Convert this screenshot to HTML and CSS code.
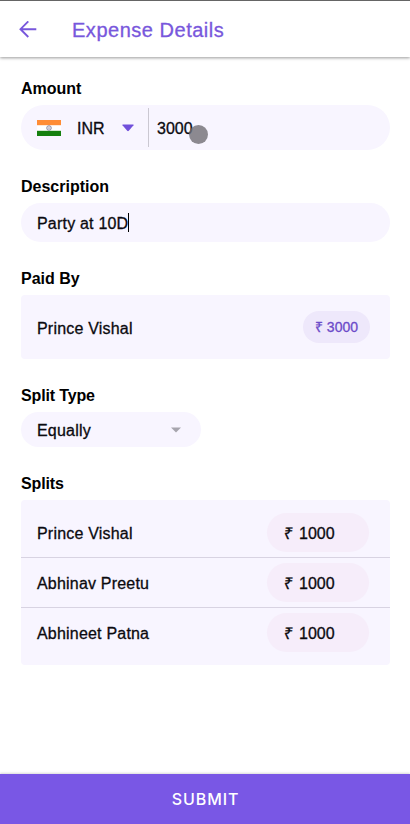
FILE: index.html
```html
<!DOCTYPE html>
<html lang="en">
<head>
<meta charset="utf-8">
<title>Expense Details</title>
<link rel="stylesheet" href="styles.css">
</head>
<body>
<div class="screen">
  <header class="header">
    <svg class="back" width="18" height="18" viewBox="0 0 18 18" fill="none" stroke="currentColor" stroke-width="1.9"><path d="M17.3 8.2H1.6M9.3.4L1.5 8.2l7.8 7.8"/></svg>
    <h1 class="title">Expense Details</h1>
  </header>
  <main class="form">
    <section class="group">
      <h2 class="label">Amount</h2>
      <div class="field amount">
        <svg class="flag" width="24" height="16" viewBox="0 0 24 16"><path fill="#fff" d="M0 0h24v16H0z"/><path fill="#ff8c35" d="M0 0h24v5.2H0z"/><path fill="#15800f" d="M0 10.8h24V16H0z"/><circle cx="12" cy="8" r="2.3" fill="#e5e5ee" stroke="#777796" stroke-width=".8"/><circle cx="12" cy="8" r=".6" fill="#777796"/></svg>
        <span class="code">INR</span>
        <svg class="caret" width="12" height="8" viewBox="0 0 12 8"><path fill="#7150db" d="M.8.6h10.4q.7 0 .3.7L6.8 6.8q-.8.8-1.6 0L.5 1.3Q.1.6.8.6z"/></svg>
        <span class="value">3000<i class="touch"></i></span>
      </div>
    </section>
    <section class="group">
      <h2 class="label">Description</h2>
      <div class="field description"><span>Party at 10D</span><i class="cursor"></i></div>
    </section>
    <section class="group">
      <h2 class="label">Paid By</h2>
      <div class="card payer"><span class="name">Prince Vishal</span><span class="paid">₹ 3000</span></div>
    </section>
    <section class="group">
      <h2 class="label tight">Split Type</h2>
      <div class="field select"><span>Equally</span><svg width="10" height="6" viewBox="0 0 10 6"><path fill="#a7a5ae" d="M0 .4h10L5 5.4z"/></svg></div>
    </section>
    <section class="group">
      <h2 class="label tight">Splits</h2>
      <div class="card splits">
        <div class="row"><span class="name">Prince Vishal</span><span class="share"><span class="rupee">₹</span>1000</span></div>
        <div class="row"><span class="name">Abhinav Preetu</span><span class="share"><span class="rupee">₹</span>1000</span></div>
        <div class="row"><span class="name">Abhineet Patna</span><span class="share"><span class="rupee">₹</span>1000</span></div>
      </div>
    </section>
  </main>
  <button class="submit">SUBMIT</button>
</div>
</body>
</html>
```

FILE: styles.css
```css
* { box-sizing: border-box; }
body {
  margin: 0;
  background: #fff;
  color: #0b0a0f;
  font: 16px/18px "Liberation Sans", Arial, sans-serif;
  -webkit-text-stroke: 0.3px currentColor;
}
.screen { display: flex; flex-direction: column; height: 824px; overflow: hidden; }
.header {
  display: flex;
  align-items: center;
  flex: none;
  height: 57px;
  padding: 2px 19px 0;
  border-top: 1px solid #656565;
  box-shadow: 0 1px 3px rgba(0, 0, 0, 0.4);
  color: #7857dc;
}
.back { margin-right: 35px; }
.title { margin: 0; font-size: 20px; line-height: 24px; font-weight: 400; letter-spacing: 0.52px; }
.form { flex: 1; display: flex; flex-direction: column; gap: 27px; padding: 22px 20px 0 21px; }
.label { margin: 0 0 7px; padding-top: 1px; font-size: 16px; line-height: 18px; font-weight: 700; color: #000; -webkit-text-stroke: 0; }
.tight { letter-spacing: -0.15px; }
.field { display: flex; align-items: center; padding: 0 16px; background: #f8f5ff; border-radius: 23px; }
.amount { height: 45px; }
.code { width: 30px; margin-left: 16px; padding-top: 2px; }
.caret { margin-left: 15px; }
.value {
  position: relative;
  display: flex;
  align-items: center;
  height: 39px;
  margin-left: 14px;
  padding: 2px 0 0 8px;
  border-left: 1px solid #cbc8d2;
}
.touch { position: absolute; left: 40px; top: 17px; width: 19px; height: 19px; border-radius: 50%; background: rgba(112, 110, 116, 0.8); }
.description { height: 39px; padding-top: 2px; letter-spacing: 0.2px; }
.cursor { width: 1px; height: 19px; margin-bottom: 2px; background: #000; }
.card { background: #f8f5ff; border-radius: 4px; }
.payer { display: flex; align-items: center; justify-content: space-between; height: 64px; padding: 0 20px 0 16px; }
.name { letter-spacing: 0.2px; padding-top: 2px; }
.payer .name { padding-top: 3px; }
.paid {
  width: 67px;
  height: 32px;
  border-radius: 16px;
  background: #eee8fb;
  color: #6c4bc9;
  font-size: 14px;
  line-height: 32px;
  text-align: center;
}
.select { width: 180px; height: 35px; justify-content: space-between; padding: 0 20px 0 16px; }
.select span { padding-top: 2px; letter-spacing: 0.2px; }
.splits { padding: 8px 0; }
.row { display: flex; align-items: center; justify-content: space-between; height: 50px; padding: 0 21px 0 16px; border-bottom: 1px solid #d8d3e2; }
.row:last-child { height: 49px; border-bottom: 0; }
.share { display: flex; align-items: center; width: 102px; height: 39px; padding: 2px 0 0 17px; border-radius: 20px; background: #f6edfa; }
.rupee { width: 15px; transform: skewX(-8deg); }
.submit {
  flex: none;
  height: 50px;
  padding: 0;
  border: 0;
  background: #7957e5;
  color: #fff;
  font: 500 16px/50px Inter, sans-serif;
  letter-spacing: 0.9px;
  text-indent: 1px;
  box-shadow: 0 -1px 2px rgba(0, 0, 0, 0.15);
  -webkit-text-stroke: 0;
}
```
